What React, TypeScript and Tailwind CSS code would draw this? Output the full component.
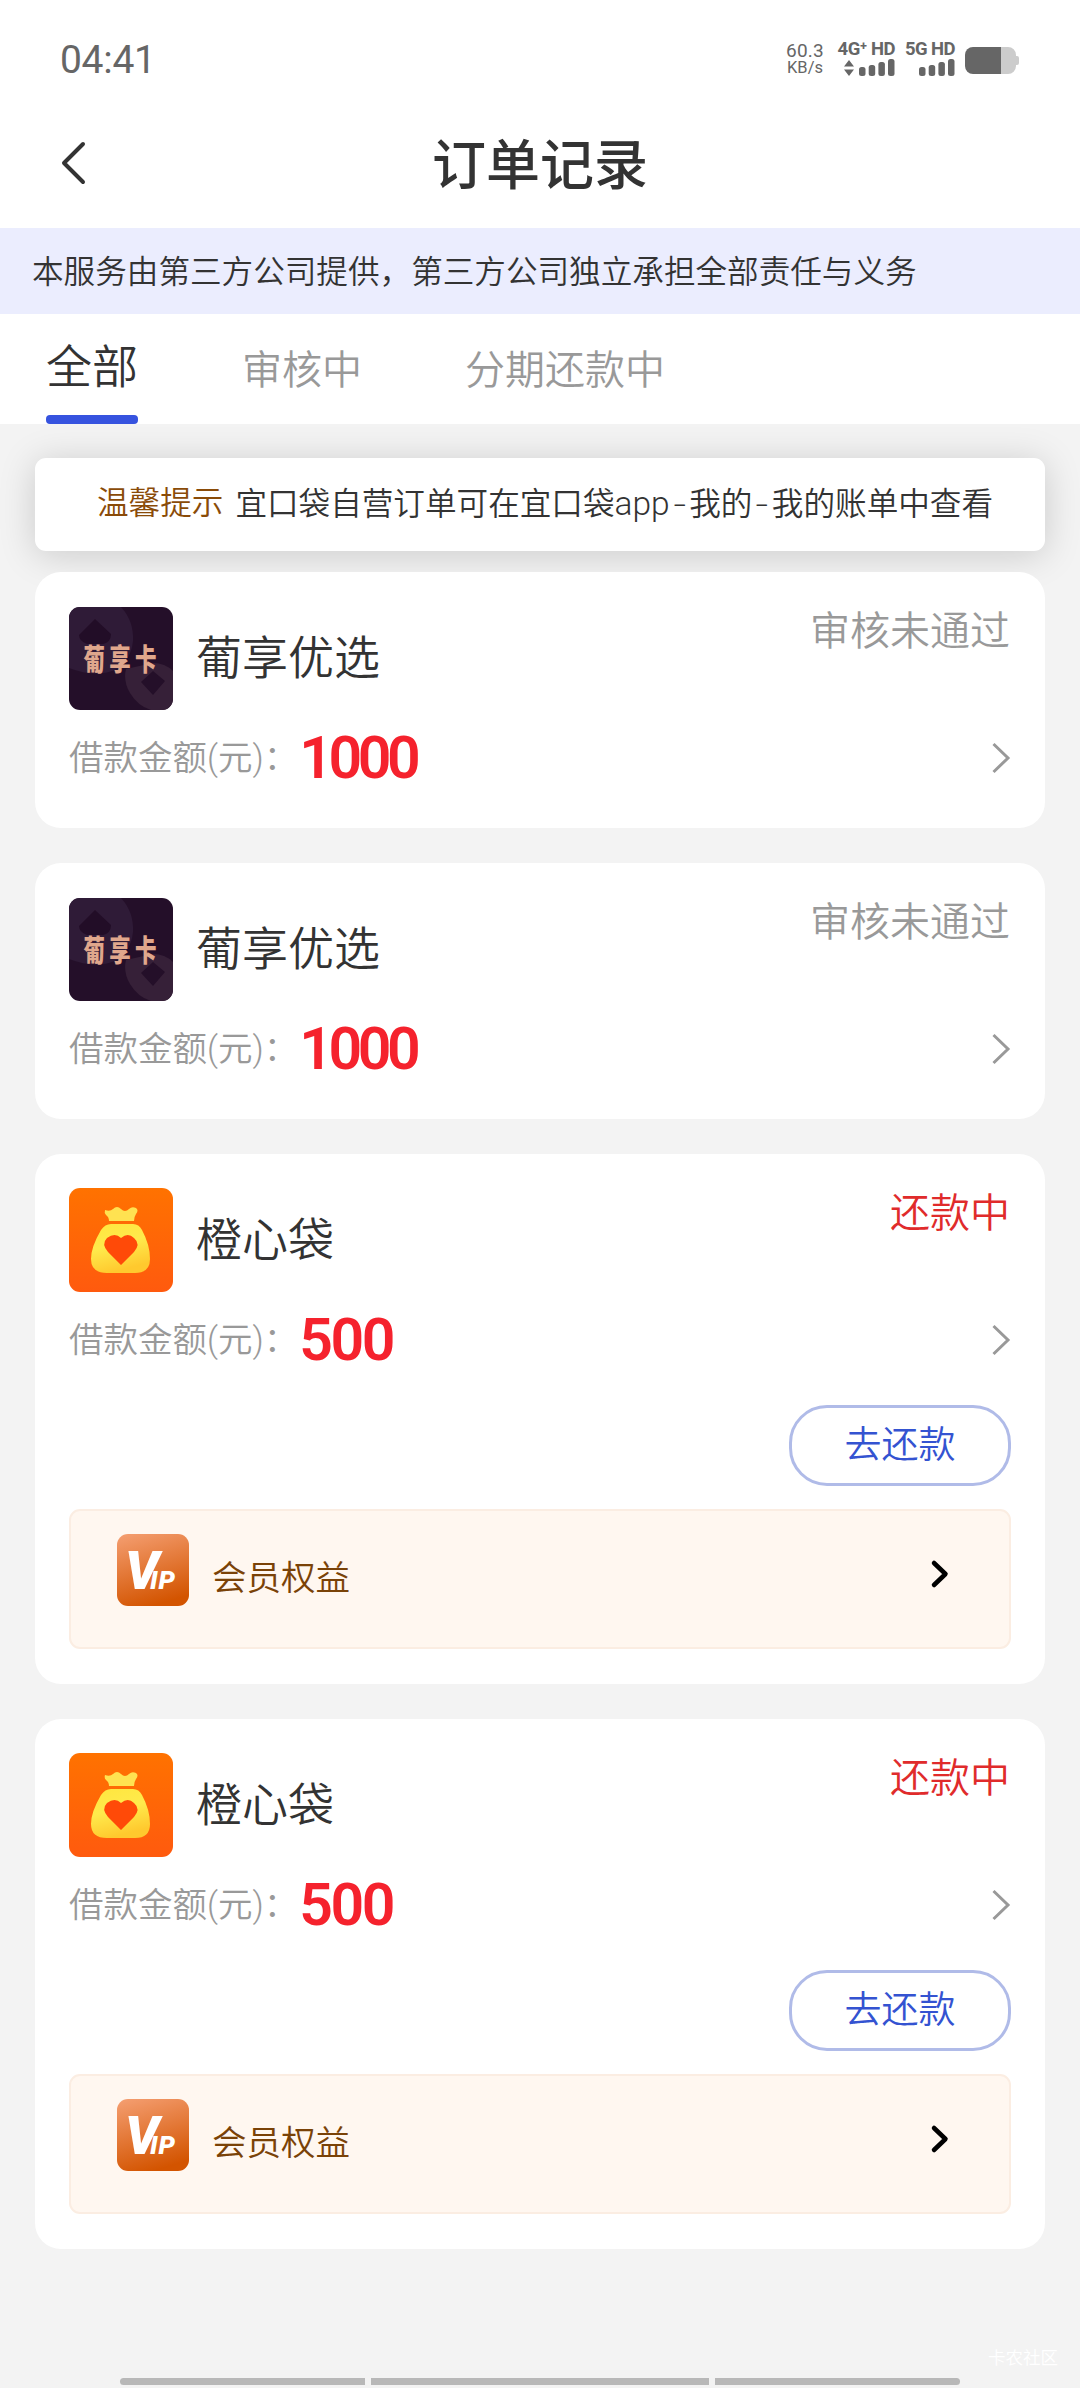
import React from 'react';

type OrderStatus = 'rejected' | 'repaying';

interface Order {
  id: number;
  product: string;
  amount: number;
  status: OrderStatus;
}

const orders: Order[] = [
  { id: 1, product: '葡享优选', amount: 1000, status: 'rejected' },
  { id: 2, product: '葡享优选', amount: 1000, status: 'rejected' },
  { id: 3, product: '橙心袋', amount: 500, status: 'repaying' },
  { id: 4, product: '橙心袋', amount: 500, status: 'repaying' },
];

const SignalBars = () => (
  <svg width="36" height="17" viewBox="0 0 36 17" fill="#666">
    <rect x="0" y="8" width="6.5" height="9" rx="2.5" />
    <rect x="9.7" y="6" width="6.5" height="11" rx="2.5" />
    <rect x="19.4" y="3" width="6.5" height="14" rx="2.5" />
    <rect x="29" y="0" width="6.5" height="17" rx="2.5" />
  </svg>
);

const StatusBar = () => (
  <div className="flex h-[120px] items-center font-normal text-[#666]">
    <span className="ml-[60px] text-[39px] leading-none tracking-[-0.3px]">04:41</span>
    <div className="mr-[61px] ml-auto flex h-[40px] items-start">
      <div className="mr-[13px] flex w-[38px] flex-col items-center pt-[2px] text-[17.5px] leading-[17px]">
        <span className="text-[19px] tracking-[0.2px]">60.3</span>
        <span className="text-[16.5px]">KB/s</span>
      </div>
      <div className="mr-[11px] flex w-[58px] flex-col items-end whitespace-nowrap font-bold">
        <span className="text-[18.5px] leading-[18px] tracking-[-0.5px]">4G⁺ HD</span>
        <div className="mt-[1px] flex items-center gap-[5px]">
          <svg width="10" height="16" viewBox="0 0 10 16" fill="#666">
            <path d="M5 0l5 6.500H0zM5 16l5-6.500H0z" />
          </svg>
          <SignalBars />
        </div>
      </div>
      <div className="mr-[10px] flex w-[49px] flex-col items-end whitespace-nowrap font-bold">
        <span className="text-[18.5px] leading-[18px] tracking-[-0.6px]">5G HD</span>
        <div className="mt-[1px]">
          <SignalBars />
        </div>
      </div>
      <svg className="mt-[7px]" width="54" height="27" viewBox="0 0 54 27">
        <path d="M36 0h7a8 8 0 0 1 8 8v1h1q2 0 2 2v5q0 2-2 2h-1v1a8 8 0 0 1-8 8h-7z" fill="#ccc" />
        <path d="M36 0H8a8 8 0 0 0-8 8v11a8 8 0 0 0 8 8h28z" fill="#666" />
      </svg>
    </div>
  </div>
);

const GrapeCardLogo = () => (
  <svg className="mt-px rounded-[11px]" width="104" height="103" viewBox="0 0 104 103">
    <rect width="104" height="104" fill="#240f29" />
    <path d="M0 0h52q13 14 12 34-2 20-18 29-20 8-46-2z" fill="#2f1b37" />
    <path d="M26 12l16 15q0 8-8 10H18q-8-3-8-9z" fill="#220d27" />
    <path d="M57 62q-3 12 4 24 9 15 25 18h8q10-2 10-12V64q-8-8-20-8z" fill="#362038" />
    <path d="M84 64l12 10-12 14-12-13z" fill="#240f29" />
    <text transform="translate(14.500 63) scale(0.86 1.18)" fontSize="25" fontWeight="900" fill="#e0a78c" letterSpacing="5">
      葡享卡
    </text>
  </svg>
);

const OrangeBagLogo = () => (
  <svg className="rounded-[11px]" width="104" height="104" viewBox="0 0 104 104">
    <defs>
      <linearGradient id="bagBg" x1="0" y1="0" x2="0" y2="1">
        <stop offset="0" stopColor="#ff7200" />
        <stop offset="1" stopColor="#ff5a0e" />
      </linearGradient>
      <linearGradient id="bagFill" x1="0" y1="0" x2="0.3" y2="1">
        <stop offset="0" stopColor="#ffe63e" />
        <stop offset="0.5" stopColor="#ffea4c" />
        <stop offset="1" stopColor="#ffc92e" />
      </linearGradient>
    </defs>
    <rect width="104" height="104" fill="url(#bagBg)" />
    <path d="M36 22q5 2 8-1 4-4 8 0 4 4 8 0 3-3 7-1 3 2 0 6-2 3-2 7H40q0-4-3-6-2-2-1-5z" fill="#ffe251" />
    <path d="M42 36h22q6 0 9 6 8 15 8 29 0 14-15 14H38Q22 85 22 71q0-12 10-29 4-6 10-6z" fill="url(#bagFill)" />
    <path d="M52 77L39 64q-7-8-1-14 8-6 14 0 7-6 13 0 7 6 0 14z" fill="#ff4a08" />
  </svg>
);

const VipLogo = () => (
  <svg className="rounded-[11px]" width="72" height="72" viewBox="0 0 72 72">
    <defs>
      <linearGradient id="vipBg" x1="0.2" y1="0" x2="0.5" y2="1">
        <stop offset="0" stopColor="#f39b6c" />
        <stop offset="1" stopColor="#d35400" />
      </linearGradient>
    </defs>
    <rect width="72" height="72" fill="url(#vipBg)" />
    <text x="8" y="55" fontWeight="900" fontStyle="italic" fill="#fff">
      <tspan fontSize="53" letterSpacing="-9">V</tspan>
      <tspan fontSize="26" letterSpacing="1">IP</tspan>
    </text>
  </svg>
);

const Dash = () => <span className="inline-block w-[19.5px] scale-x-[1.4] text-center">-</span>;

const OrderCard: React.FC<{ order: Order }> = ({ order }) => {
  const isRepaying = order.status === 'repaying';

  return (
    <div className={`rounded-[26px] bg-white px-[34px] pt-[34px] ${isRepaying ? 'h-[530px]' : 'h-[256px]'}`}>
      <div className="flex h-[104px]">
        {isRepaying ? <OrangeBagLogo /> : <GrapeCardLogo />}
        <h2 className="ml-[23px] text-[46px] leading-[104px] font-[350] text-[#333]">{order.product}</h2>
        <span className={`mr-px ml-auto text-[40px] leading-[52px] ${isRepaying ? 'text-[#e02b2b]' : 'text-[#999]'}`}>
          {isRepaying ? '还款中' : '审核未通过'}
        </span>
      </div>
      <div className="mt-[19px] flex h-[58px] items-center">
        <span className="text-[34.5px] leading-none text-[#999]">借款金额(元)：</span>
        <span
          className={`mb-[2px] ml-px text-[59px] leading-none font-semibold text-[#f5222d] ${
            order.amount >= 1000 ? 'tracking-[-4.5px]' : 'tracking-[-2.5px]'
          }`}
        >
          {order.amount}
        </span>
        <svg className="ml-auto" width="19" height="32" viewBox="0 0 19 32" fill="none" stroke="#999" strokeWidth="3">
          <path d="M1.500 2L16 16 1.500 30" />
        </svg>
      </div>
      {isRepaying && (
        <>
          <div className="mt-[36px] flex justify-end">
            <button className="h-[81px] w-[222px] rounded-[38px] border-[3px] border-[#b0bbe8] text-[37px] leading-none text-[#3453d1]">
              去还款
            </button>
          </div>
          <div className="mt-[23px] flex h-[140px] rounded-[11px] border-2 border-[#fbede2] bg-[#fff7f0] pt-[23px] pl-[46px]">
            <VipLogo />
            <span className="ml-[23px] text-[34.5px] leading-[88px] text-[#7a4207]">会员权益</span>
            <svg className="mt-[24px] mr-[59px] ml-auto" width="20" height="32" viewBox="0 0 20 32" fill="none" stroke="#000" strokeWidth="4.500" strokeLinecap="round" strokeLinejoin="round">
              <path d="M4 5l11.500 11L4 27" />
            </svg>
          </div>
        </>
      )}
    </div>
  );
};

export default function App() {
  return (
    <div className="flex h-[2388px] w-[1080px] flex-col overflow-hidden bg-[#f3f3f3] font-[Roboto,'Noto_Sans_CJK_SC',sans-serif] font-[350]">
      <div className="bg-white">
        <StatusBar />
        <header className="flex h-[108px] items-start">
          <svg className="mt-[20px] ml-[60px]" width="28" height="46" viewBox="0 0 28 46" fill="none" stroke="#333" strokeWidth="4" strokeLinecap="round" strokeLinejoin="round">
            <path d="M23 4L4 23l19 19" />
          </svg>
          <h1 className="mr-[88px] flex-1 text-center text-[54px] leading-[93px] font-medium text-[#333]">订单记录</h1>
        </header>
      </div>
      <div className="h-[86px] bg-[#ebedfe] pl-[32px] text-[31.6px] leading-[89px] text-[#333]">
        本服务由第三方公司提供，第三方公司独立承担全部责任与义务
      </div>
      <nav className="flex h-[110px] bg-white pl-[46px] text-[40px] leading-[113px] text-[#999]">
        <div className="flex w-[92px] flex-col text-[46px] text-[#333]">
          <span className="h-[101px] leading-[107px]">全部</span>
          <div className="h-[9px] rounded-[4px] bg-[#3653df]" />
        </div>
        <span className="ml-[104px]">审核中</span>
        <span className="ml-[103px]">分期还款中</span>
      </nav>
      <main className="flex flex-col px-[35px] pt-[34px]">
        <div className="flex h-[93px] rounded-[11px] bg-white pl-[62px] text-[31.6px] leading-[92px] whitespace-nowrap text-[#333] shadow-[0_4px_36px_rgba(0,0,0,0.17)]">
          <span className="mr-[12px] text-[#8a4b08]">温馨提示</span>
          <span>
            宜口袋自营订单可在宜口袋<span className="text-[33.5px]">app</span>
            <Dash />
            我的
            <Dash />
            我的账单中查看
          </span>
        </div>
        <div className="relative mt-[21px] flex flex-col gap-[35px]">
          {orders.map((order) => (
            <OrderCard key={order.id} order={order} />
          ))}
        </div>
      </main>
      <footer className="mt-auto pb-[3px]">
        <div className="mr-[22px] mb-[10px] text-right text-[17.5px] leading-[20px] text-white">卡农社区</div>
        <div className="mx-[120px] flex h-[7px] gap-[6px]">
          <div className="w-[245px] rounded-l-[4px] bg-[#b8b8b8]" />
          <div className="flex-1 bg-[#b8b8b8]" />
          <div className="w-[245px] rounded-r-[4px] bg-[#b8b8b8]" />
        </div>
      </footer>
    </div>
  );
}
